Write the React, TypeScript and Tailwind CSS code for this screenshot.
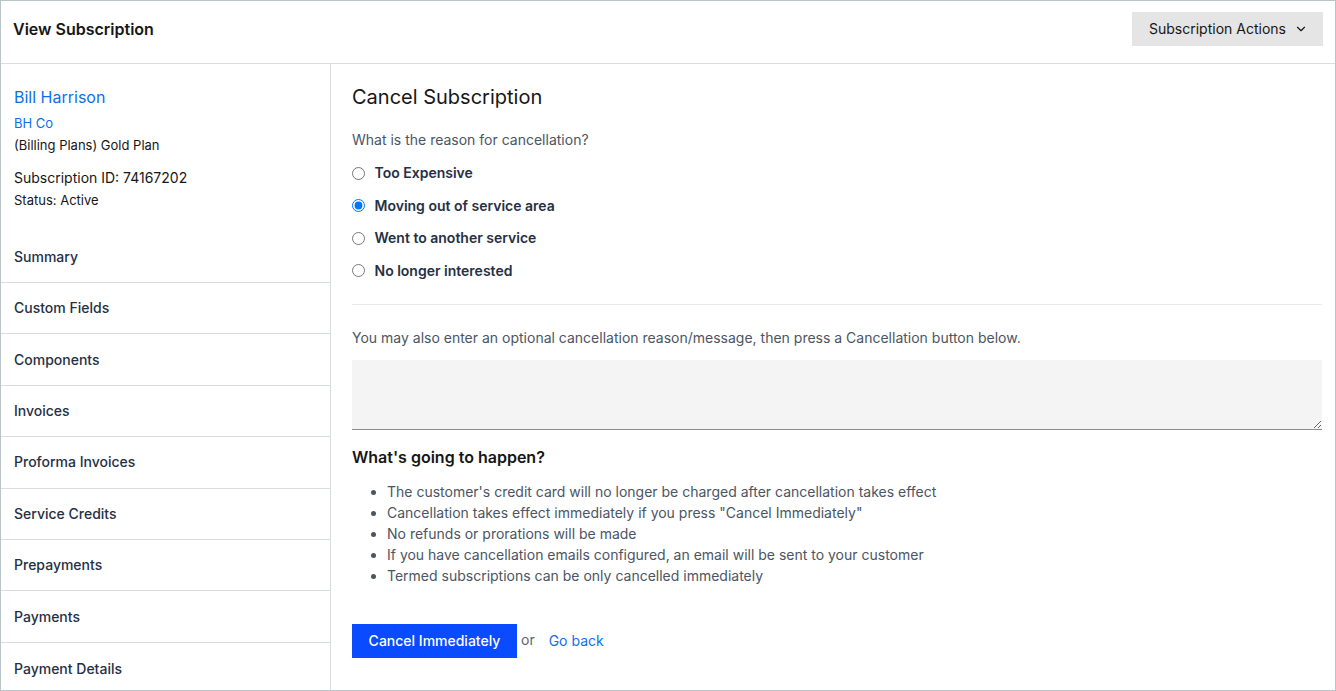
import React from "react";
import { ChevronDown } from "lucide-react";

const navItems = [
  "Summary",
  "Custom Fields",
  "Components",
  "Invoices",
  "Proforma Invoices",
  "Service Credits",
  "Prepayments",
  "Payments",
  "Payment Details",
];

const reasons = [
  { label: "Too Expensive", checked: false },
  { label: "Moving out of service area", checked: true },
  { label: "Went to another service", checked: false },
  { label: "No longer interested", checked: false },
];

const notes = [
  "The customer's credit card will no longer be charged after cancellation takes effect",
  'Cancellation takes effect immediately if you press "Cancel Immediately"',
  "No refunds or prorations will be made",
  "If you have cancellation emails configured, an email will be sent to your customer",
  "Termed subscriptions can be only cancelled immediately",
];

export default function App() {
  return (
    <div className="h-[691px] w-[1336px] overflow-hidden border border-[#b9c4c6] bg-white font-['Inter',sans-serif] text-[#161616]">
      <header className="flex h-[63px] items-start justify-between border-b border-[#d9dcdf] pl-3 pr-3 pt-[11px]">
        <h1 className="text-base font-semibold leading-[34px]">View Subscription</h1>
        <button className="flex h-[34px] w-[191px] items-center gap-2 bg-[#e5e5e5] pl-[17px] text-sm">
          Subscription Actions
          <ChevronDown size={14} strokeWidth={2} />
        </button>
      </header>

      <div className="flex h-[626px]">
        <aside className="w-[330px] shrink-0 border-r border-[#d9dcdf]">
          <div className="pl-[13px] pt-[23px]">
            <a className="block text-base leading-5 text-[#0f6fe8]">Bill Harrison</a>
            <a className="mt-[7px] block text-[13px] leading-[18px] text-[#0f6fe8]">BH Co</a>
            <p className="mt-[4px] text-[13px] leading-[18px]">(Billing Plans) Gold Plan</p>
            <p className="mt-[14px] text-sm leading-5">Subscription ID: 74167202</p>
            <p className="mt-[3px] text-[13px] leading-[18px]">Status: Active</p>
          </div>
          <nav className="mt-[22.7px]">
            {navItems.map((item) => (
              <div
                key={item}
                className="flex h-[51.4px] items-center border-b border-[#d9dcdf] pl-[13px] text-sm font-medium text-[#253044] last:border-b-0"
              >
                {item}
              </div>
            ))}
          </nav>
        </aside>

        <main className="min-w-0 flex-1 pl-[21px] pr-[13px] pt-[21px]">
          <h2 className="text-xl leading-6">Cancel Subscription</h2>
          <p className="mt-[21px] text-sm leading-5 text-[#4b5563]">What is the reason for cancellation?</p>

          <div className="mt-[13px] flex flex-col gap-[12.5px] border-b border-[#e8e9eb] pb-[23px]">
            {reasons.map((reason) => (
              <label key={reason.label} className="flex h-5 items-center gap-[9.5px] text-sm font-semibold text-[#253044]">
                <input
                  type="radio"
                  name="reason"
                  defaultChecked={reason.checked}
                  className="m-0 h-[13px] w-[13px]"
                />
                {reason.label}
              </label>
            ))}
          </div>

          <p className="mt-[23px] text-sm leading-5 text-[#4b5563]">
            You may also enter an optional cancellation reason/message, then press a Cancellation button below.
          </p>
          <textarea className="mt-[12px] block h-[70px] w-full border-b border-[#8d8d8d] bg-[#f4f4f4]" />

          <h3 className="mt-[17px] text-base font-semibold leading-5">What's going to happen?</h3>
          <ul className="mt-[14px] list-disc pl-[35px] text-sm leading-[21px] text-[#4b5563]">
            {notes.map((note) => (
              <li key={note}>{note}</li>
            ))}
          </ul>

          <div className="mt-[38px] flex items-center text-sm">
            <button className="h-[34px] w-[165px] bg-[#0a4bff] text-sm font-medium text-white">Cancel Immediately</button>
            <span className="ml-[4px] -translate-y-px text-[#5b6470]">or</span>
            <a className="ml-[14px] text-[#0f6fe8]">Go back</a>
          </div>
        </main>
      </div>
    </div>
  );
}
